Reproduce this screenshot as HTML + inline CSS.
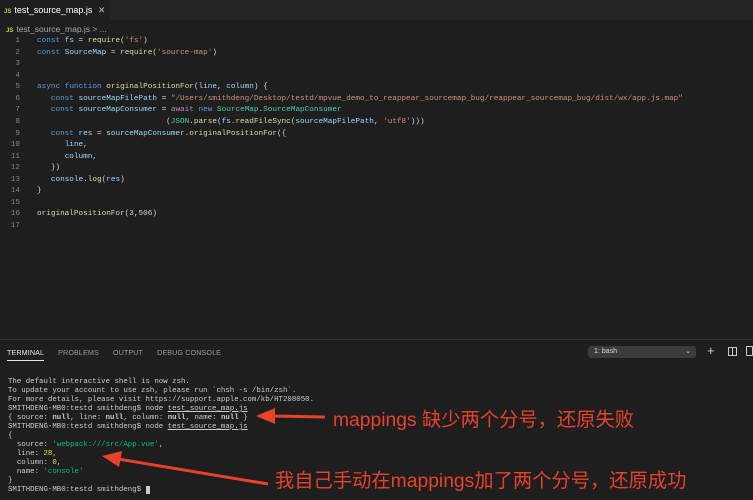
<!DOCTYPE html>
<html><head><meta charset="utf-8"><style>
*{margin:0;padding:0;box-sizing:border-box}
body{width:753px;height:500px;background:#1e1e1e;overflow:hidden;position:relative;font-family:"Liberation Sans",sans-serif;color:#ccc}
.tabbar{position:absolute;left:0;top:0;width:753px;height:20px;background:#252526}
.tab{position:absolute;left:0;top:0;width:110px;height:20px;background:#1e1e1e;font-size:9px;color:#fff;padding:5px 0 0 4px}
.js{color:#cbcb41;font-size:6px;font-weight:bold;margin-right:3px}
.crumb{position:absolute;left:6px;top:24px;font-size:8.5px;color:#aaa}
.code{position:absolute;left:0;top:36px;font-family:"Liberation Mono",monospace;font-size:7.7px;line-height:11.56px;white-space:pre;color:#d4d4d4}
.ln{display:inline-block;width:20px;text-align:right;color:#858585;margin-right:17px}
.k{color:#569cd6}.f{color:#dcdcaa}.s{color:#ce9178}.v{color:#9cdcfe}.c{color:#4ec9b0}.p{color:#c586c0}
.panel{position:absolute;left:0;top:339px;width:753px;height:161px;border-top:1px solid #3a3a3a;background:#1e1e1e}
.ptabs{position:absolute;top:8px;left:7px;font-size:7.2px;color:#999;letter-spacing:.1px}
.ptabs span{margin-right:14px}
.ptabs .a{color:#e7e7e7;border-bottom:1px solid #e7e7e7;padding-bottom:3px}
.sel{position:absolute;left:588px;top:6px;width:108px;height:12px;background:#3c3c3c;border-radius:3px;font-size:7px;color:#ddd;padding:2px 0 0 6px}
.term{position:absolute;left:8px;top:38px;font-family:"Liberation Mono",monospace;font-size:7.4px;line-height:9.0px;white-space:pre;color:#ccc}
.g{color:#0dbc79}.y{color:#e5e510}.b{font-weight:bold}
.ann{position:absolute;color:#e8412c;font-family:"Liberation Sans","Noto Sans CJK SC",sans-serif;font-size:19.3px;white-space:nowrap}
</style></head><body>
<div class="tabbar"><div class="tab"><span class="js">JS</span>test_source_map.js <span style="color:#bbb;margin-left:3px">✕</span></div></div>
<div class="crumb"><span class="js">JS</span>test_source_map.js &gt; ...</div>
<div class="code"><span class="ln">1</span><span class="k">const</span> <span class="v">fs</span> = <span class="f">require</span>(<span class="s">'fs'</span>)
<span class="ln">2</span><span class="k">const</span> <span class="v">SourceMap</span> = <span class="f">require</span>(<span class="s">'source-map'</span>)
<span class="ln">3</span>
<span class="ln">4</span>
<span class="ln">5</span><span class="k">async</span> <span class="k">function</span> <span class="f">originalPositionFor</span>(<span class="v">line</span>, <span class="v">column</span>) {
<span class="ln">6</span>   <span class="k">const</span> <span class="v">sourceMapFilePath</span> = <span class="s">"/Users/smithdeng/Desktop/testd/mpvue_demo_to_reappear_sourcemap_bug/reappear_sourcemap_bug/dist/wx/app.js.map"</span>
<span class="ln">7</span>   <span class="k">const</span> <span class="v">sourceMapConsumer</span> = <span class="p">await</span> <span class="k">new</span> <span class="c">SourceMap</span>.<span class="c">SourceMapConsumer</span>
<span class="ln">8</span>                            (<span class="c">JSON</span>.<span class="f">parse</span>(<span class="v">fs</span>.<span class="f">readFileSync</span>(<span class="v">sourceMapFilePath</span>, <span class="s">'utf8'</span>)))
<span class="ln">9</span>   <span class="k">const</span> <span class="v">res</span> = <span class="v">sourceMapConsumer</span>.<span class="f">originalPositionFor</span>({
<span class="ln">10</span>      <span class="v">line</span>,
<span class="ln">11</span>      <span class="v">column</span>,
<span class="ln">12</span>   })
<span class="ln">13</span>   <span class="v">console</span>.<span class="f">log</span>(<span class="v">res</span>)
<span class="ln">14</span>}
<span class="ln">15</span>
<span class="ln">16</span><span class="f">originalPositionFor</span>(3,506)
<span class="ln">17</span></div>
<div class="panel">
<div class="ptabs"><span class="a">TERMINAL</span><span>PROBLEMS</span><span>OUTPUT</span><span>DEBUG CONSOLE</span></div>
<div class="sel">1: bash<span style="position:absolute;right:5px;top:1px">⌄</span></div>
<div style="position:absolute;left:707px;top:3px;font-size:13px;color:#ccc">+</div>
<div style="position:absolute;left:728px;top:7px;width:9px;height:9px;border:1px solid #ccc"><div style="position:absolute;left:3px;top:0;width:1px;height:7px;background:#ccc"></div></div>
<div style="position:absolute;left:746px;top:6px;width:7px;height:10px;border:1px solid #ccc;border-radius:1px"></div>
<div class="term">The default interactive shell is now zsh.
To update your account to use zsh, please run `chsh -s /bin/zsh`.
For more details, please visit https://support.apple.com/kb/HT208050.
SMITHDENG-MB0:testd smithdeng$ node <u>test_source_map.js</u>
{ source: <span class="b">null</span>, line: <span class="b">null</span>, column: <span class="b">null</span>, name: <span class="b">null</span> }
SMITHDENG-MB0:testd smithdeng$ node <u>test_source_map.js</u>
{
  source: <span class="g">'webpack:///src/App.vue'</span>,
  line: <span class="y">28</span>,
  column: <span class="y">0</span>,
  name: <span class="g">'console'</span>
}
SMITHDENG-MB0:testd smithdeng$ <span style="background:#ccc"> </span></div>
</div>
<svg style="position:absolute;left:0;top:0" width="753" height="500">
<line x1="325" y1="417" x2="272" y2="416" stroke="#e8412c" stroke-width="3"/>
<polygon points="256,416 275,408 275,424" fill="#e8412c"/>
<line x1="268" y1="484" x2="118" y2="459" stroke="#e8412c" stroke-width="3"/>
<polygon points="102,456 122,451 119,467" fill="#e8412c"/>
</svg>
<div class="ann" style="left:333px;top:404px">mappings 缺少两个分号，还原失败</div>
<div class="ann" style="left:275px;top:465px">我自己手动在mappings加了两个分号，还原成功</div>
</body></html>
